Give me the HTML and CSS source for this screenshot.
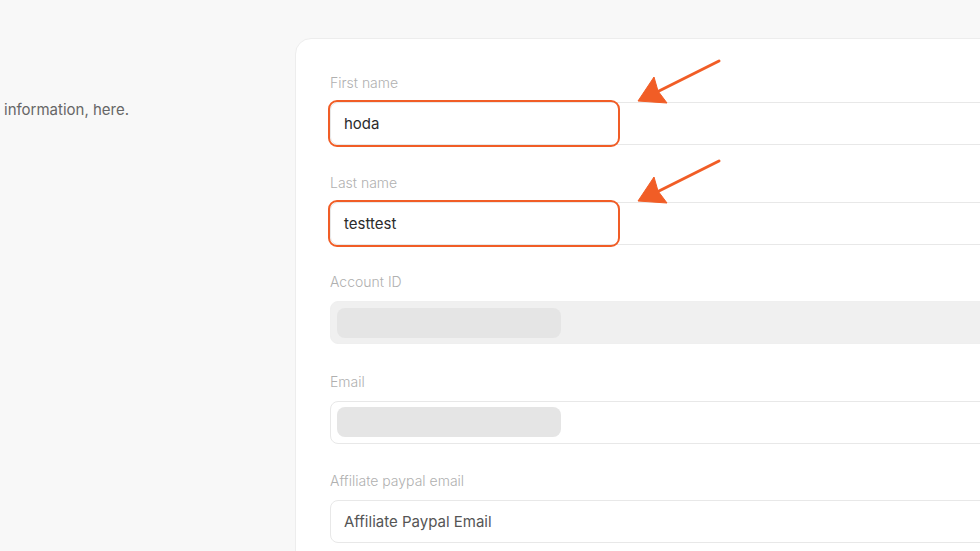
FILE: index.html
```html
<!DOCTYPE html>
<html>
<head>
<meta charset="utf-8">
<link rel="stylesheet" href="styles.css">
</head>
<body>
<div class="page">
  <aside class="side">
    <p class="side-text">information, here.</p>
  </aside>
  <main class="card">
    <div class="field">
      <div class="label">First name</div>
      <div class="input-wrap">
        <div class="input">hoda</div>
        <div class="highlight"></div>
      </div>
    </div>
    <div class="field">
      <div class="label">Last name</div>
      <div class="input-wrap">
        <div class="input">testtest</div>
        <div class="highlight"></div>
      </div>
    </div>
    <div class="field">
      <div class="label">Account ID</div>
      <div class="input-wrap">
        <div class="input input-disabled"><span class="skeleton"></span></div>
      </div>
    </div>
    <div class="field">
      <div class="label">Email</div>
      <div class="input-wrap">
        <div class="input input-skel"><span class="skeleton"></span></div>
      </div>
    </div>
    <div class="field">
      <div class="label">Affiliate paypal email</div>
      <div class="input-wrap">
        <div class="input input-placeholder">Affiliate Paypal Email</div>
      </div>
    </div>
  </main>
  <svg class="arrows" width="980" height="551" viewBox="0 0 980 551">
    <g fill="#f15d26" stroke="#f15d26">
      <line x1="719" y1="61" x2="655" y2="93" stroke-width="3" stroke-linecap="round"/>
      <polygon points="638,101 654,77 658,91 667,103" stroke-width="1" stroke-linejoin="round"/>
      <line x1="719" y1="161" x2="655" y2="193" stroke-width="3" stroke-linecap="round"/>
      <polygon points="638,201 654,177 658,191 667,203" stroke-width="1" stroke-linejoin="round"/>
    </g>
  </svg>
</div>
</body>
</html>
```
FILE: styles.css
```css
* { box-sizing: border-box; }
html, body {
  margin: 0;
  padding: 0;
  background: #f8f8f8;
  overflow: hidden;
  width: 980px;
  height: 551px;
  font-family: Inter, "Liberation Sans", sans-serif;
}
.page {
  position: relative;
  display: flex;
  width: 980px;
  height: 551px;
  padding-top: 38px;
}
.side {
  width: 295px;
  flex-shrink: 0;
  padding-left: 4px;
  padding-top: 62px;
}
.side-text {
  margin: 0;
  font-size: 15px;
  line-height: 20px;
  color: #666;
}
.card {
  flex-shrink: 0;
  width: 900px;
  height: 700px;
  background: #fff;
  border: 1px solid #ededed;
  border-radius: 16px;
  padding: 34px 34px;
}
.field {
  margin-bottom: 27.5px;
}
.label {
  font-size: 14px;
  line-height: 20px;
  font-weight: 300;
  color: #b0b0b0;
  margin-bottom: 9px;
}
.input-wrap {
  position: relative;
}
.input {
  height: 43px;
  border: 1px solid #e8e8e8;
  border-radius: 8px;
  padding: 0 13px;
  display: flex;
  align-items: center;
  font-size: 15px;
  color: #2b2b2b;
  background: #fff;
}
.input-disabled {
  background: #f0f0f0;
  border-color: #efefef;
  padding: 0 6px;
}
.input-skel {
  padding: 0 6px;
}
.skeleton {
  display: block;
  width: 224px;
  height: 30px;
  border-radius: 8px;
  background: #e5e5e5;
}
.input-placeholder {
  color: #555;
}
.highlight {
  position: absolute;
  left: -2px;
  top: -2px;
  width: 292px;
  height: 47px;
  border: 2.5px solid #f15d26;
  border-radius: 9px;
}
.arrows {
  position: absolute;
  left: 0;
  top: 0;
  pointer-events: none;
}
```
